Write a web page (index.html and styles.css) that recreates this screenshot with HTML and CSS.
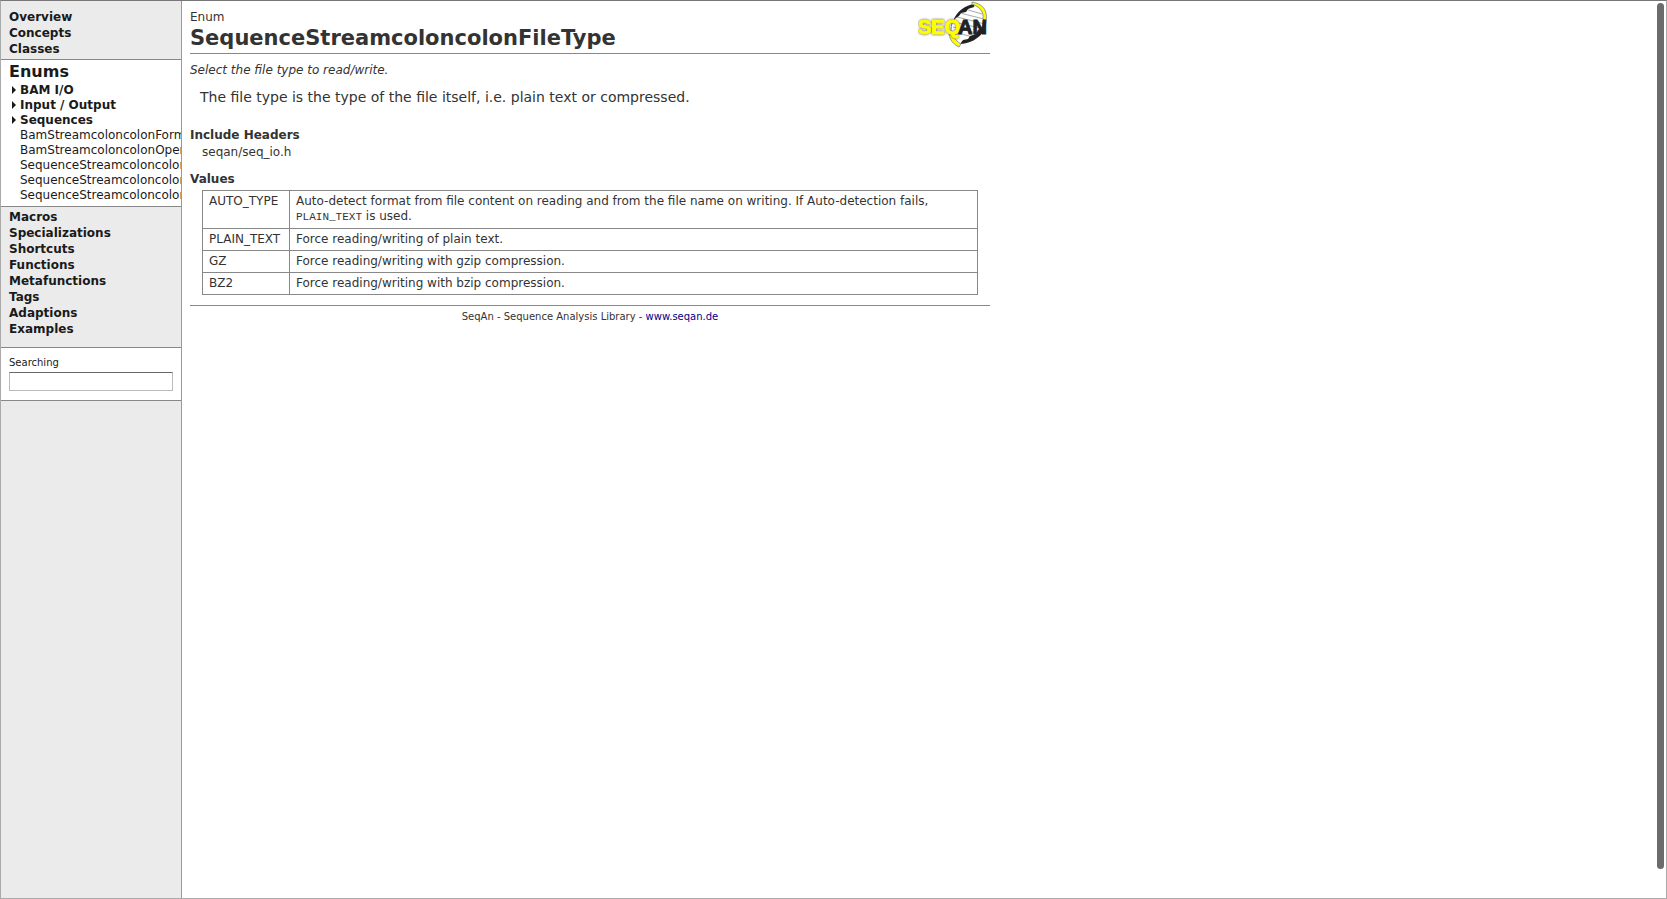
FILE: index.html
```html
<!DOCTYPE html>
<html lang="en">
<head>
<meta charset="utf-8">
<title>SequenceStreamcoloncolonFileType</title>
<link rel="stylesheet" href="styles.css">
</head>
<body>
<div class="frame">
  <aside class="sidebar">
    <nav class="nav nav-top">
      <a href="#">Overview</a>
      <a href="#">Concepts</a>
      <a href="#">Classes</a>
    </nav>
    <section class="current">
      <a class="current-title" href="#">Enums</a>
      <ul class="tree">
        <li><a class="group" href="#">BAM I/O</a></li>
        <li><a class="group" href="#">Input / Output</a></li>
        <li><a class="group" href="#">Sequences</a></li>
        <li><a href="#">BamStreamcoloncolonFormat</a></li>
        <li><a href="#">BamStreamcoloncolonOperationMode</a></li>
        <li><a href="#">SequenceStreamcoloncolonFileFormat</a></li>
        <li><a href="#">SequenceStreamcoloncolonFileType</a></li>
        <li><a href="#">SequenceStreamcoloncolonOperationMode</a></li>
      </ul>
    </section>
    <nav class="nav nav-bottom">
      <a href="#">Macros</a>
      <a href="#">Specializations</a>
      <a href="#">Shortcuts</a>
      <a href="#">Functions</a>
      <a href="#">Metafunctions</a>
      <a href="#">Tags</a>
      <a href="#">Adaptions</a>
      <a href="#">Examples</a>
    </nav>
    <form class="search">
      <label for="search">Searching</label>
      <input id="search" type="text">
    </form>
  </aside>
  <main class="content">
    <header class="page-head">
      <div>
        <div class="kind">Enum</div>
        <h1>SequenceStreamcoloncolonFileType</h1>
      </div>
      <svg class="logo" viewBox="0 0 72 48" role="img" aria-label="SeqAn">
        <g transform="translate(-1 0)">
          <path d="M33 33C32 17 42 6 58 4C72 16 67 36 45 42C40 41 36 38 33 33Z" fill="#fff"/>
          <path d="M48 8l17 5M43 12l24 6M40 16l28 7M37 21l30 7M36 26l27 7M36 31l20 5" stroke="#aaa" fill="none"/>
          <path d="M36 20C40 10 48 4 58 3L57 6L51 8L49 11L44 12L42 15L39 17Z" fill="#222"/>
          <path d="M36 20C34 24 34 27 34 32" fill="none" stroke="#777"/>
          <path d="M43 43L46 39L51 38L53 35L59 33L61 29L65 26L66 19L69 18C71 31 59 42 43 43Z" fill="#222"/>
          <path d="M55 1C66 3 71 9 69 21L66 18C67 11 63 6 55 3Z" fill="#ff0" stroke="#999"/>
          <path d="M32 33L36 33C37 37 40 41 44 43L42 46C36 43 33 39 32 33Z" fill="#ff0" stroke="#999"/>
        </g>
        <text class="logo-seq" x="0" y="33">SEQ</text>
        <text class="logo-an" x="40" y="33">AN</text>
      </svg>
    </header>
    <p class="summary">Select the file type to read/write.</p>
    <p class="description">The file type is the type of the file itself, i.e. plain text or compressed.</p>
    <h2>Include Headers</h2>
    <p class="include">seqan/seq_io.h</p>
    <h2>Values</h2>
    <table class="values">
      <tr><td>AUTO_TYPE</td><td>Auto-detect format from file content on reading and from the file name on writing. If Auto-detection fails, <code>PLAIN_TEXT</code> is used.</td></tr>
      <tr><td>PLAIN_TEXT</td><td>Force reading/writing of plain text.</td></tr>
      <tr><td>GZ</td><td>Force reading/writing with gzip compression.</td></tr>
      <tr><td>BZ2</td><td>Force reading/writing with bzip compression.</td></tr>
    </table>
    <footer>SeqAn - Sequence Analysis Library - <a href="#">www.seqan.de</a></footer>
  </main>
  <div class="scrollbar"></div>
</div>
</body>
</html>
```
FILE: styles.css
```css
* { box-sizing: border-box; }

body {
  margin: 0;
  background: #fff;
  color: #333;
  font: 12px/15px Verdana, "DejaVu Sans", sans-serif;
}

a { color: inherit; text-decoration: none; }

.frame {
  display: flex;
  min-height: 100vh;
  border: 1px solid #aaa;
  border-top-color: #777;
}

.sidebar {
  width: 181px;
  flex: none;
  overflow: hidden;
  background: #ebebeb;
  border-right: 1px solid #999;
  color: #1a1a1a;
}

.nav {
  display: flex;
  flex-direction: column;
  padding: 0 8px;
  font-weight: bold;
  line-height: 16px;
}

.nav-top { padding-top: 8px; padding-bottom: 2px; }
.nav-bottom { padding-top: 2px; padding-bottom: 10px; }

.current {
  background: #fff;
  border: solid #888;
  border-width: 1px 0;
  padding: 2px 0 3px 8px;
}

.current-title {
  display: block;
  margin-bottom: 2px;
  font-size: 16px;
  font-weight: bold;
  line-height: 19px;
}

.tree {
  list-style: none;
  margin: 0;
  padding: 0 0 0 11px;
  white-space: nowrap;
}

.tree .group { position: relative; font-weight: bold; }

.tree .group::before {
  content: "";
  position: absolute;
  left: -8px;
  top: 3px;
  border: solid transparent;
  border-width: 4px 0 4px 4px;
  border-left-color: #1a1a1a;
}

.search {
  background: #fff;
  border: solid #888;
  border-width: 1px 0;
  padding: 8px 8px 9px;
}

.search label { display: block; font-size: 10px; line-height: 14px; }

.search input {
  display: block;
  width: 100%;
  height: 19px;
  margin-top: 2px;
  padding: 0 2px;
  border: 1px solid #bbb;
  border-top: 1px solid #666;
  background: #fff;
}

.content {
  flex: 0 1 816px;
  padding: 8px;
}

.page-head {
  display: flex;
  justify-content: space-between;
  height: 45px;
  border-bottom: 1px solid #888;
}

.kind { line-height: 16px; }

h1 { margin: 0; font-size: 21px; line-height: 26px; }

.logo { width: 72px; height: 48px; margin-top: -8px; flex: none; }
.logo text { font: bold 20px "Liberation Sans", sans-serif; }
.logo-seq {
  fill: #ff0;
  stroke: #ff0;
  stroke-width: 1px;
  filter: drop-shadow(0 0 1px #555);
}
.logo-an { fill: #222; stroke: #222; stroke-width: 1px; }

.summary { margin: 9px 0 11px; font-style: italic; }

.description { margin: 0 0 21px 10px; font-size: 14px; line-height: 17px; }

h2 { margin: 0; font-size: 12px; line-height: 17px; }

.include { margin: 0 0 10px 12px; line-height: 17px; }

.values {
  width: calc(100% - 24px);
  margin: 2px 12px 10px;
  border-collapse: collapse;
}

.values td {
  border: 1px solid #888;
  padding: 3px 6px;
  vertical-align: top;
}

.values tr:first-child td { padding-bottom: 4px; }

.values td:first-child { width: 87px; }

code { font: 11px/12px "Courier New", "Liberation Mono", monospace; }

footer {
  border-top: 1px solid #888;
  padding-top: 4px;
  font-size: 10px;
  line-height: 14px;
  text-align: center;
}

footer a { color: #008; }

.scrollbar {
  width: 7px;
  height: 866px;
  margin: 2px 2px 0 auto;
  border-radius: 4px;
  background: #6b6b6b;
}
```
